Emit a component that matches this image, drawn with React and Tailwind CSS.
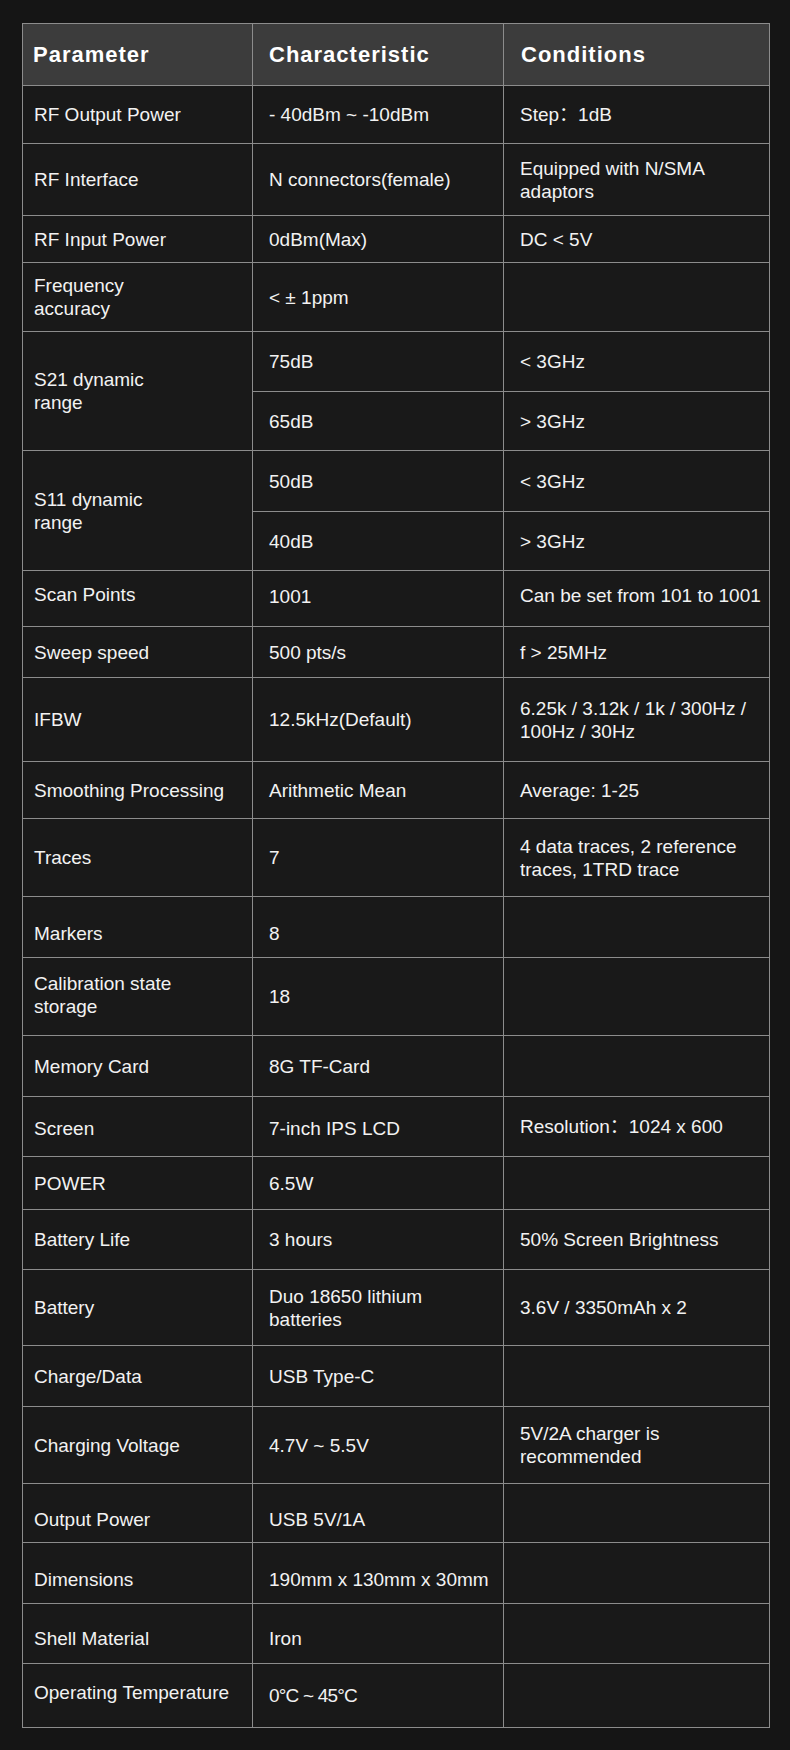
const rows = [
  { c: ['RF Output Power', '- 40dBm ~ -10dBm', 'Step：1dB'] },
  { c: ['RF Interface', 'N connectors(female)', ['Equipped with N/SMA', 'adaptors']] },
  { c: ['RF Input Power', '0dBm(Max)', 'DC < 5V'] },
  { c: [['Frequency', 'accuracy'], '< ± 1ppm', ''] },
  { c: [['S21 dynamic', 'range'], '75dB', '< 3GHz'], span: true },
  { c: [null, '65dB', '> 3GHz'] },
  { c: [['S11 dynamic', 'range'], '50dB', '< 3GHz'], span: true },
  { c: [null, '40dB', '> 3GHz'] },
  { c: ['Scan Points', '1001', 'Can be set from 101 to 1001'], n: ['pb-[8px]', 'pb-[4px]', 'pb-[6px]'] },
  { c: ['Sweep speed', '500 pts/s', 'f > 25MHz'] },
  { c: ['IFBW', '12.5kHz(Default)', ['6.25k / 3.12k / 1k / 300Hz /', '100Hz / 30Hz']] },
  { c: ['Smoothing Processing', 'Arithmetic Mean', 'Average: 1-25'] },
  { c: ['Traces', '7', ['4 data traces, 2 reference', 'traces, 1TRD trace']] },
  { c: ['Markers', '8', ''], n: ['pt-[12px]', 'pt-[12px]', ''] },
  { c: [['Calibration state', 'storage'], '18', ''], n: ['pb-[4px]', '', ''] },
  { c: ['Memory Card', '8G TF-Card', ''] },
  { c: ['Screen', '7-inch IPS LCD', 'Resolution：1024 x 600'], n: ['pt-[4px]', 'pt-[4px]', ''] },
  { c: ['POWER', '6.5W', ''] },
  { c: ['Battery Life', '3 hours', '50% Screen Brightness'] },
  { c: ['Battery', ['Duo 18650 lithium', 'batteries'], '3.6V / 3350mAh x 2'] },
  { c: ['Charge/Data', 'USB Type-C', ''] },
  { c: ['Charging Voltage', '4.7V ~ 5.5V', ['5V/2A charger is', 'recommended']] },
  { c: ['Output Power', 'USB 5V/1A', ''], n: ['pt-[12px]', 'pt-[12px]', ''] },
  { c: ['Dimensions', '190mm x 130mm x 30mm', ''], n: ['pt-[12px]', 'pt-[12px]', ''] },
  { c: ['Shell Material', 'Iron', ''], n: ['pt-[10px]', 'pt-[10px]', ''] },
  { c: ['Operating Temperature', '0°C ~ 45°C', ''], n: ['pb-[6px]', 'tracking-[-0.8px]', ''] },
];

const pad = ['pl-[11px]', 'pl-[16px]', 'pl-[16px]'];

function Text({ v }) {
  if (Array.isArray(v)) {
    return (
      <div>
        {v.map((line, i) => (
          <div key={i}>{line}</div>
        ))}
      </div>
    );
  }
  return <div>{v}</div>;
}

export default function App() {
  const cells = [];
  rows.forEach((row, r) => {
    row.c.forEach((v, i) => {
      if (v === null) return;
      const nudge = row.n ? row.n[i] : '';
      cells.push(
        <div
          key={r + '-' + i}
          className={`flex items-center border-r border-b border-[#8c8c8c] bg-[#191919] whitespace-nowrap ${pad[i]} ${nudge} ${
            i === 0 && row.span ? 'row-span-2' : ''
          }`}
        >
          <Text v={v} />
        </div>
      );
    });
  });

  return (
    <div className="min-h-[1750px] w-[790px] bg-[#151515] pt-[23px] pl-[22px] font-['Liberation_Sans','Noto_Sans_CJK_SC',sans-serif] text-[19px] leading-[23px] text-[#f2f2f2]">
      <div className="grid w-[748px] grid-cols-[230px_251px_266px] grid-rows-[62px_58px_72px_47px_69px_60px_59px_61px_59px_56px_51px_84px_57px_78px_61px_78px_61px_60px_53px_60px_76px_61px_77px_59px_61px_60px_64px] border-t border-l border-[#8c8c8c]">
        {/* Header */}
        <div className="flex items-center border-r border-b border-[#8c8c8c] bg-[#3c3c3c] pl-[10px] text-[22px] font-bold tracking-[1px] text-white">
          Parameter
        </div>
        <div className="flex items-center border-r border-b border-[#8c8c8c] bg-[#3c3c3c] pl-[16px] text-[22px] font-bold tracking-[1px] text-white">
          Characteristic
        </div>
        <div className="flex items-center border-r border-b border-[#8c8c8c] bg-[#3c3c3c] pl-[17px] text-[22px] font-bold tracking-[1px] text-white">
          Conditions
        </div>
        {cells}
      </div>
    </div>
  );
}
